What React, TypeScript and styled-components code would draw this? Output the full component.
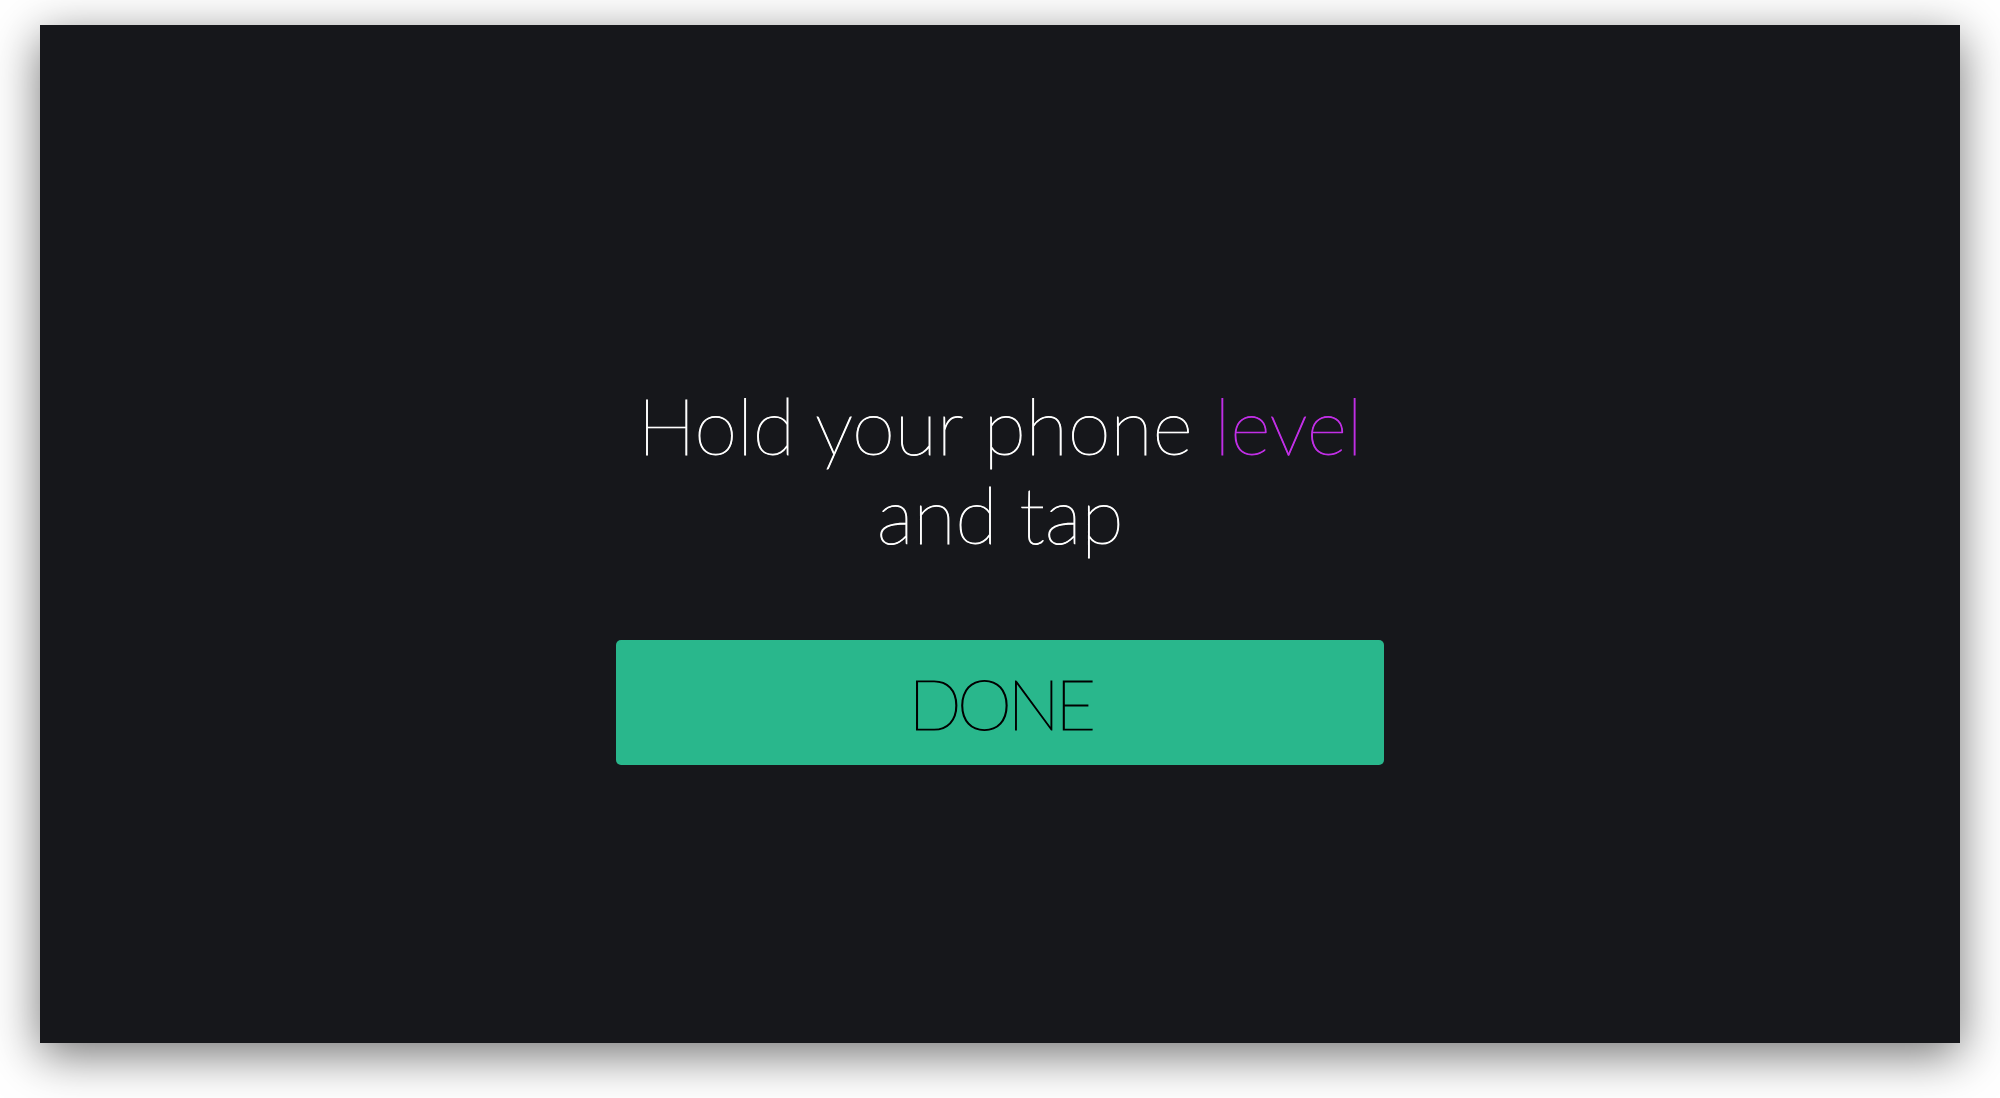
import React from "react";
import styled, { createGlobalStyle } from "styled-components";

const Global = createGlobalStyle`
  html, body { margin: 0; padding: 0; background: #ffffff; }
  body { font-family: Lato, "Open Sans", sans-serif; }
`;

const Page = styled.div`
  width: 2000px;
  height: 1098px;
  padding: 25px 40px 55px;
  box-sizing: border-box;
`;

const Panel = styled.main`
  width: 1920px;
  height: 1018px;
  background: #16171b;
  box-shadow: 0 12px 45px rgba(0, 0, 0, 0.55);
  display: flex;
  flex-direction: column;
  align-items: center;
  padding-top: 356px;
  box-sizing: border-box;
`;

const Prompt = styled.h1`
  margin: 0;
  font-family: Lato, sans-serif;
  font-weight: 100;
  font-size: 78px;
  line-height: 89px;
  letter-spacing: -0.3px;
  color: #ffffff;
  -webkit-text-stroke: 0.9px currentColor;
  text-align: center;
`;

const Accent = styled.span`
  color: #c12fe6;
`;

const DoneButton = styled.button`
  margin-top: 81px;
  width: 768px;
  height: 125px;
  border: none;
  border-radius: 5px;
  background: #29b78c;
  color: #000000;
  font-family: Lato, sans-serif;
  font-weight: 100;
  font-size: 70px;
  letter-spacing: -4.5px;
  -webkit-text-stroke: 1.2px currentColor;
  padding: 0;
  display: flex;
  align-items: center;
  justify-content: center;
  cursor: pointer;
`;

export default function App() {
  return (
    <Page>
      <Global />
      <Panel>
        <Prompt>
          Hold your phone <Accent>level</Accent>
          <br />
          and tap
        </Prompt>
        <DoneButton>DONE</DoneButton>
      </Panel>
    </Page>
  );
}
